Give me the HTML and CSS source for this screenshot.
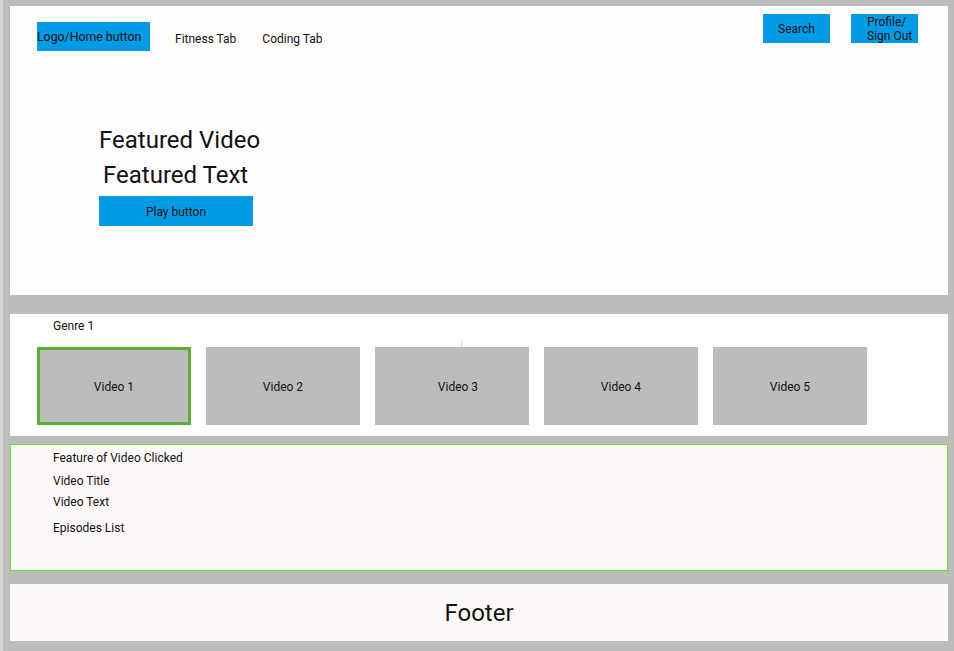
FILE: index.html
```html
<!DOCTYPE html>
<html>
<head>
<meta charset="utf-8">
<link rel="stylesheet" href="styles.css">
</head>
<body>
<div class="page">
  <header class="hero-panel">
    <nav class="nav">
      <div class="nav-left">
        <div class="btn logo">Logo/Home button</div>
        <span class="tab">Fitness Tab</span>
        <span class="tab">Coding Tab</span>
      </div>
      <div class="nav-right">
        <div class="btn search">Search</div>
        <div class="btn profile">Profile/<br>Sign Out</div>
      </div>
    </nav>
    <div class="hero">
      <div class="hero-title">Featured Video</div>
      <div class="hero-text">Featured Text</div>
      <div class="btn play">Play button</div>
    </div>
  </header>

  <section class="genre-panel">
    <div class="genre-label">Genre 1</div>
    <div class="tiles">
      <div class="tile selected">Video 1</div>
      <div class="tile">Video 2</div>
      <div class="tile offset">Video 3</div>
      <div class="tile">Video 4</div>
      <div class="tile">Video 5</div>
    </div>
  </section>

  <section class="detail-panel">
    <div class="detail-line first">Feature of Video Clicked</div>
    <div class="detail-line title">Video Title</div>
    <div class="detail-line text">Video Text</div>
    <div class="detail-line episodes">Episodes List</div>
  </section>

  <footer class="footer">Footer</footer>
</div>
</body>
</html>
```

FILE: styles.css
```css
html, body {
  margin: 0;
  padding: 0;
}
body {
  background: #bcbcbc;
  font-family: Roboto, "Liberation Sans", sans-serif;
  color: #111;
  font-size: 12px;
  line-height: 14px;
}
.page {
  width: 954px;
  height: 651px;
  box-sizing: border-box;
  border-left: 3px solid #d6d6d6;
  padding: 6px 6px 10px 7px;
  display: flex;
  flex-direction: column;
}
.hero-panel {
  height: 289px;
  box-sizing: border-box;
  background: #fffcfd;
  padding: 8px 30px 0 27px;
}
.nav {
  display: flex;
  justify-content: space-between;
  align-items: flex-start;
}
.nav-left {
  display: flex;
  align-items: center;
  margin-top: 8px;
}
.nav-right {
  display: flex;
  gap: 21px;
}
.btn {
  background: #039be5;
  color: #111;
  box-sizing: border-box;
}
.logo {
  width: 113px;
  height: 29px;
  display: flex;
  align-items: center;
  font-size: 12.3px;
  padding-top: 1px;
}
.tab {
  margin-left: 25px;
  padding-top: 5px;
  font-size: 12px;
}
.tab + .tab {
  margin-left: 26px;
}
.search {
  width: 67px;
  height: 29px;
  display: flex;
  align-items: center;
  justify-content: center;
}
.profile {
  width: 67px;
  height: 29px;
  padding-left: 16px;
  padding-top: 1px;
  line-height: 14px;
}
.hero {
  margin-left: 62px;
  margin-top: 75px;
  display: flex;
  flex-direction: column;
  align-items: flex-start;
}
.hero-title,
.hero-text {
  font-size: 24px;
  line-height: 28px;
}
.hero-text {
  margin-top: 7px;
  margin-left: 4px;
}
.play {
  margin-top: 7px;
  width: 154px;
  height: 30px;
  padding-top: 1px;
  display: flex;
  align-items: center;
  justify-content: center;
}
.genre-panel {
  margin-top: 19px;
  height: 122px;
  box-sizing: border-box;
  background: #ffffff;
  padding: 5px 0 0 27px;
}
.genre-label {
  margin-left: 16px;
}
.tiles {
  display: flex;
  gap: 15px;
  margin-top: 14px;
}
.tile {
  position: relative;
  width: 154px;
  height: 78px;
  box-sizing: border-box;
  background: #bcbcbc;
  padding-top: 1px;
  display: flex;
  align-items: center;
  justify-content: center;
}
.tile.offset {
  padding-left: 12px;
}
.tile.offset::before {
  content: "";
  position: absolute;
  left: 86px;
  top: -6px;
  width: 1px;
  height: 6px;
  background: #dcdcdc;
}
.tile.selected {
  border: 3px solid #5aae33;
}
.detail-panel {
  margin-top: 8px;
  height: 127px;
  box-sizing: border-box;
  background: #fdf9f8;
  border: 1px solid #66dd33;
  padding: 6px 0 0 42px;
}
.detail-line.title {
  margin-top: 9px;
}
.detail-line.text {
  margin-top: 7px;
}
.detail-line.episodes {
  margin-top: 12px;
}
.footer {
  margin-top: 13px;
  height: 57px;
  background: #fdf9f8;
  display: flex;
  align-items: center;
  justify-content: center;
  font-size: 24px;
  line-height: 28px;
}
```
